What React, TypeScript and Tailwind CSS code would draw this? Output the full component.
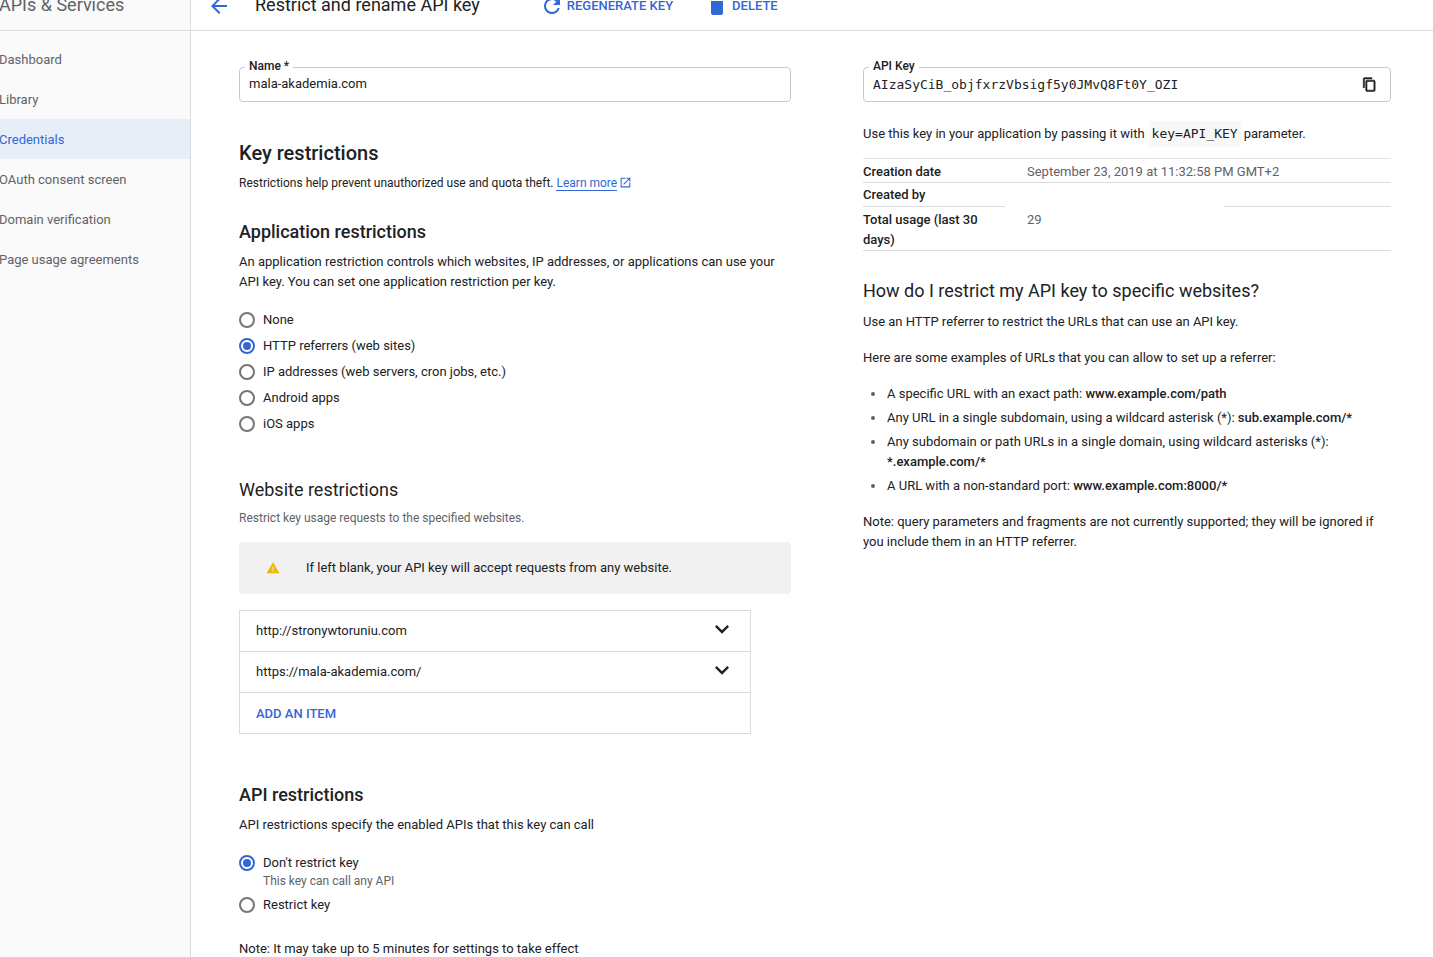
import React from 'react';

const navItems = ['Dashboard', 'Library', 'Credentials', 'OAuth consent screen', 'Domain verification', 'Page usage agreements'];
const appOptions = ['None', 'HTTP referrers (web sites)', 'IP addresses (web servers, cron jobs, etc.)', 'Android apps', 'iOS apps'];

const Radio = ({ checked }: { checked?: boolean }) => (
	<span className={`flex h-4 w-4 shrink-0 items-center justify-center rounded-full border-2 ${checked ? 'border-[#3367d6]' : 'border-[#757575]'}`}>
		{checked && <span className="h-2 w-2 rounded-full bg-[#3367d6]" />}
	</span>
);

const RadioRow = ({ label, checked }: { label: string; checked?: boolean }) => (
	<div className="flex h-[26px] items-center gap-2 text-[13px] text-[#202124]">
		<Radio checked={checked} />
		<span>{label}</span>
	</div>
);

const Chevron = () => (
	<svg width="28" height="28" viewBox="0 0 24 24" fill="#202124" className="-mr-[2px] -mt-[4px]">
		<path d="M7.41 8.59 12 13.17l4.59-4.58L18 10l-6 6-6-6z" />
	</svg>
);

const UrlRow = ({ url }: { url: string }) => (
	<div className="flex h-[41px] items-center justify-between border-b border-[#dadce0] pl-4 pr-4 text-[13px] text-[#202124]">
		<span>{url}</span>
		<Chevron />
	</div>
);

const Bullet = ({ children }: { children: React.ReactNode }) => (
	<li className="relative pl-6 text-[13px] leading-[20px]">
		<span className="absolute left-[8px] top-[8px] h-[4px] w-[4px] rounded-full bg-[#5f6368]" />
		{children}
	</li>
);

export default function App() {
	return (
		<div className="flex h-[957px] w-[1433px] flex-col overflow-hidden bg-white font-['Roboto',sans-serif] text-[#202124]">
			{/* Top bar, scrolled partly out of view */}
			<div className="flex h-[31px] shrink-0 border-b border-[#dadce0]">
				<div className="flex w-[191px] shrink-0 items-end border-r border-[#dadce0] bg-[#fafafa] pb-[13px]">
					<span className="-ml-px text-[18px] leading-[24px] text-[#5f6368]">APIs &amp; Services</span>
				</div>
				<div className="flex flex-1 items-end pb-[13px]">
					<svg width="24" height="24" viewBox="0 0 24 24" fill="#3367d6" className="ml-[16px] -mb-[1px]">
						<path d="M20 11H7.83l5.59-5.59L12 4l-8 8 8 8 1.41-1.41L7.83 13H20v-2z" />
					</svg>
					<span className="ml-[24px] text-[18px] leading-[24px]">Restrict and rename API key</span>
					<div className="ml-[60px] -mb-px flex items-center">
						<svg width="24" height="24" viewBox="0 0 24 24" fill="#3367d6">
							<path d="M17.65 6.35A7.96 7.96 0 0 0 12 4a8 8 0 1 0 7.73 10h-2.08A6 6 0 1 1 12 6c1.66 0 3.14.69 4.22 1.78L13 11h7V4l-2.35 2.35z" />
						</svg>
						<span className="ml-[3px] text-[13px] font-medium text-[#3367d6]">REGENERATE KEY</span>
					</div>
					<div className="ml-[32px] -mb-px flex items-center">
						<svg width="24" height="24" viewBox="0 0 24 24" fill="#3367d6">
							<path d="M6 19c0 1.1.9 2 2 2h8c1.1 0 2-.9 2-2V7H6v12z" />
						</svg>
						<span className="ml-[3px] text-[13px] font-medium text-[#3367d6]">DELETE</span>
					</div>
				</div>
			</div>

			<div className="flex min-h-0 flex-1">
				{/* Side nav */}
				<nav className="w-[191px] shrink-0 border-r border-[#dadce0] bg-[#fafafa] pt-2">
					{navItems.map((item) => (
						<div
							key={item}
							className={`flex h-10 items-center pt-[2px] text-[13px] ${item === 'Credentials' ? 'bg-[#e8eef8] text-[#3367d6]' : 'text-[#5f6368]'}`}
						>
							<span className="-ml-px">{item}</span>
						</div>
					))}
				</nav>

				{/* Form column */}
				<main className="w-[600px] shrink-0 pl-12">
					<div className="relative mt-[36px] flex h-[35px] w-[552px] items-center rounded border border-[#c6c9cc] pb-[2px] pl-[9px] text-[13px]">
						<span className="absolute -top-[10px] left-[5px] bg-white px-1 text-[12px] font-medium leading-[16px]">Name *</span>
						<span>mala-akademia.com</span>
					</div>

					<h2 className="mt-[39px] text-[20px] font-medium leading-[24px]">Key restrictions</h2>
					<p className="mt-[8px] text-[12px] leading-[20px]">
						Restrictions help prevent unauthorized use and quota theft.{' '}
						<span className="border-b border-[#3367d6] text-[#3367d6]">Learn more</span>
						<svg width="13" height="13" viewBox="0 0 24 24" fill="#3367d6" className="ml-[2px] inline-block align-[-2px]">
							<path d="M19 19H5V5h7V3H3v18h18v-9h-2v7zM14 3v2h3.59l-9.83 9.83 1.41 1.41L19 6.41V10h2V3h-7z" />
						</svg>
					</p>

					<h3 className="mt-[27px] text-[18px] font-medium leading-[24px]">Application restrictions</h3>
					<p className="mt-[8px] w-[552px] text-[13px] leading-[20px]">
						An application restriction controls which websites, IP addresses, or applications can use your API key. You can set one application restriction per key.
					</p>
					<div className="mt-[15px]">
						{appOptions.map((opt) => (
							<RadioRow key={opt} label={opt} checked={opt.startsWith('HTTP')} />
						))}
					</div>

					<h3 className="mt-[41px] text-[18px] leading-[24px]">Website restrictions</h3>
					<p className="mt-[6px] text-[12px] leading-[20px] text-[#5f6368]">Restrict key usage requests to the specified websites.</p>
					<div className="mt-[14px] flex h-[52px] w-[552px] items-center rounded bg-[#f1f1f1] pl-[27px] text-[13px]">
						<svg width="14" height="14" viewBox="0 0 24 24" fill="#f4b400">
							<path d="M1 21h22L12 2 1 21zm12-3h-2v-2h2v2zm0-4h-2v-4h2v4z" />
						</svg>
						<span className="ml-[26px]">If left blank, your API key will accept requests from any website.</span>
					</div>

					<div className="mt-4 w-[512px] border border-[#dadce0]">
						<UrlRow url="http://stronywtoruniu.com" />
						<UrlRow url="https://mala-akademia.com/" />
						<div className="flex h-[40px] items-center pl-4 pt-[2px] text-[13px] font-medium text-[#3367d6]">ADD AN ITEM</div>
					</div>

					<h3 className="mt-[49px] text-[18px] font-medium leading-[24px]">API restrictions</h3>
					<p className="mt-[8px] text-[13px] leading-[20px]">API restrictions specify the enabled APIs that this key can call</p>
					<div className="mt-[15px]">
						<RadioRow label="Don't restrict key" checked />
						<p className="-mt-[3px] pl-6 text-[12px] leading-[16px] text-[#5f6368]">This key can call any API</p>
						<div className="mt-[3px]">
							<RadioRow label="Restrict key" />
						</div>
					</div>
					<p className="mt-[21px] text-[13px] leading-[20px]">Note: It may take up to 5 minutes for settings to take effect</p>
				</main>

				{/* Key details column */}
				<aside className="ml-[72px] w-[528px] shrink-0">
					<div className="relative mt-[36px] flex h-[35px] items-center justify-between rounded border border-[#c6c9cc] pl-[9px] pr-[13px]">
						<span className="absolute -top-[10px] left-[5px] bg-white px-1 text-[12px] font-medium leading-[16px]">API Key</span>
						<span className="font-['DejaVu_Sans_Mono',monospace] text-[13px]">AIzaSyCiB_objfxrzVbsigf5y0JMvQ8Ft0Y_OZI</span>
						<svg width="15" height="15" viewBox="0 0 24 24" fill="#202124" stroke="#202124" strokeWidth="1">
							<path d="M16 1H4c-1.1 0-2 .9-2 2v14h2V3h12V1zm3 4H8c-1.1 0-2 .9-2 2v14c0 1.1.9 2 2 2h11c1.1 0 2-.9 2-2V7c0-1.1-.9-2-2-2zm0 16H8V7h11v14z" />
						</svg>
					</div>

					<p className="mt-[19px] flex items-center text-[13px] leading-[26px]">
						Use this key in your application by passing it with
						<code className="ml-[4px] mr-[3px] bg-[#f8f8f8] px-[3px] font-['DejaVu_Sans_Mono',monospace] text-[13px]">key=API_KEY</code>
						parameter.
					</p>

					<div className="mt-[11px] border-t border-[#e3e4e6] text-[13px]">
						<div className="flex h-6 items-center border-b border-[#dadce0] pt-[2px]">
							<span className="w-[164px] font-medium">Creation date</span>
							<span className="text-[#5f6368]">September 23, 2019 at 11:32:58 PM GMT+2</span>
						</div>
						<div className="flex h-6 items-center justify-between">
							<span className="flex h-6 w-[142px] items-center border-b border-[#dadce0] font-medium">Created by</span>
							<span className="h-6 w-[167px] border-b border-[#dadce0]" />
						</div>
						<div className="flex border-b border-[#dadce0] pt-[3px] leading-[20px]">
							<span className="w-[164px] pr-[20px] font-medium">Total usage (last 30 days)</span>
							<span className="text-[#5f6368]">29</span>
						</div>
					</div>

					<h3 className="mt-[28px] text-[18px] leading-[24px]">How do I restrict my API key to specific websites?</h3>
					<p className="mt-[9px] text-[13px] leading-[20px]">Use an HTTP referrer to restrict the URLs that can use an API key.</p>
					<p className="mt-[16px] text-[13px] leading-[20px]">Here are some examples of URLs that you can allow to set up a referrer:</p>
					<ul className="mt-[16px] flex flex-col gap-1">
						<Bullet>A specific URL with an exact path: <b className="font-medium">www.example.com/path</b></Bullet>
						<Bullet>Any URL in a single subdomain, using a wildcard asterisk (*): <b className="font-medium">sub.example.com/*</b></Bullet>
						<Bullet>Any subdomain or path URLs in a single domain, using wildcard asterisks (*): <b className="font-medium">*.example.com/*</b></Bullet>
						<Bullet>A URL with a non-standard port: <b className="font-medium">www.example.com:8000/*</b></Bullet>
					</ul>
					<p className="mt-[16px] text-[13px] leading-[20px]">
						Note: query parameters and fragments are not currently supported; they will be ignored if you include them in an HTTP referrer.
					</p>
				</aside>
			</div>
		</div>
	);
}
